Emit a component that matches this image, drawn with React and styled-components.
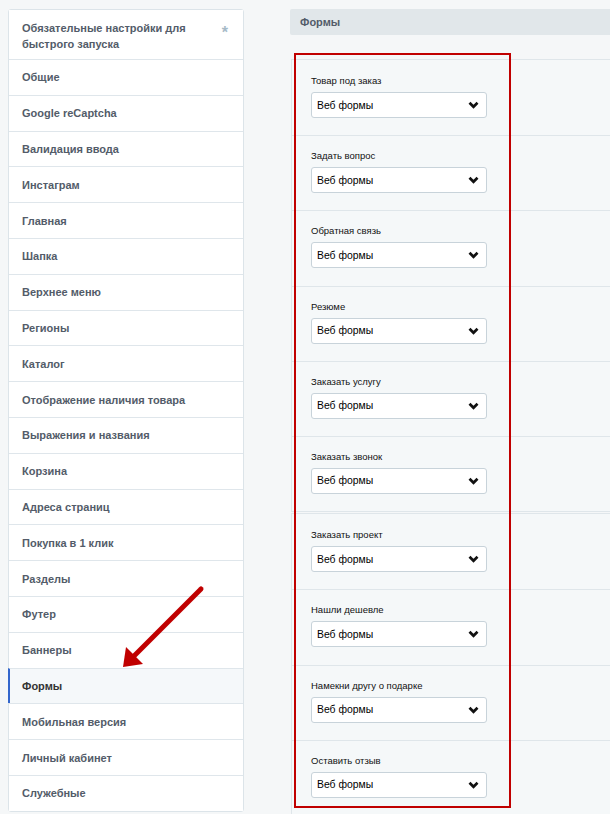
import React from "react";
import styled, { createGlobalStyle } from "styled-components";

const GlobalStyle = createGlobalStyle`
  html, body { margin: 0; padding: 0; background: #f5f7f8; overflow: hidden; }
  body { font-family: "Liberation Sans", Arial, sans-serif; }
`;

const Page = styled.div`
  position: relative;
  display: flex;
  align-items: flex-start;
  gap: 46px;
  padding: 9px 0 0 8px;
  width: 610px;
  height: 814px;
  box-sizing: border-box;
  overflow: hidden;
`;

const Sidebar = styled.nav`
  width: 236px;
  flex: none;
  background: #fff;
  border: 1px solid #dce4e9;
  border-radius: 3px;
  box-sizing: border-box;
`;

const NavItem = styled.div`
  display: flex;
  align-items: ${(p) => (p.$tall ? "flex-start" : "center")};
  justify-content: space-between;
  height: ${(p) => (p.$tall ? "49px" : "35.8px")};
  box-sizing: border-box;
  padding: ${(p) => (p.$tall ? "10px 14px 0 13px" : "0 14px 0 13px")};
  border-top: ${(p) => (p.$first ? "none" : "1px solid #dfe6eb")};
  margin-left: ${(p) => (p.$active ? "-1px" : "0")};
  border-left: ${(p) => (p.$active ? "2px solid #3366cc" : "none")};
  padding-left: ${(p) => (p.$active ? "12px" : "13px")};
  background: ${(p) => (p.$active ? "#f5f8fa" : "#fff")};
  color: ${(p) => (p.$active ? "#333" : "#535c69")};
  font-size: 11px;
  font-weight: bold;
  line-height: 16px;
`;

const Star = styled.span`
  color: #a6bac7;
  font-size: 16px;
  font-weight: bold;
  line-height: 16px;
  margin-top: 5px;
  margin-right: 1px;
`;

const Main = styled.div`
  width: 340px;
  flex: none;
  display: flex;
  flex-direction: column;
`;

const HeaderBar = styled.div`
  height: 26px;
  line-height: 26px;
  background: #e1e7ea;
  border-radius: 2px 0 0 2px;
  padding-left: 10px;
  font-size: 11px;
  font-weight: bold;
  color: #535c69;
  margin-bottom: 24px;
`;

const Card = styled.div`
  margin-left: 1px;
  margin-top: ${(p) => (p.$next ? "1px" : "0")};
  border: 1px solid #dfe6ea;
  border-right: none;
  background: #f5f8f9;
`;

const Row = styled.div`
  height: 75.2px;
  box-sizing: border-box;
  padding: ${(p) => (p.$first ? "14px" : "13px")} 0 0 19px;
  border-top: ${(p) => (p.$first ? "none" : "1px solid #dfe6ea")};
  display: flex;
  flex-direction: column;
  gap: 4px;
`;

const Label = styled.div`
  font-size: 9.5px;
  line-height: 14px;
  color: #111;
`;

const Select = styled.div`
  width: 176px;
  height: 26px;
  box-sizing: border-box;
  border: 1px solid #c8d3da;
  border-radius: 3px;
  background: #fff;
  display: flex;
  align-items: center;
  justify-content: space-between;
  padding: 0 7px 0 5px;
  font-size: 10.4px;
  color: #000;
`;

const Highlight = styled.div`
  position: absolute;
  left: 294px;
  top: 53px;
  width: 217px;
  height: 755px;
  box-sizing: border-box;
  border: 2px solid #c00000;
  pointer-events: none;
`;

const ArrowSvg = styled.svg`
  position: absolute;
  left: 0;
  top: 0;
  pointer-events: none;
`;

const Chevron = () => (
  <svg width="11" height="8" viewBox="0 0 11 8">
    <path d="M1.5 1.8 L5.5 5.8 L9.5 1.8" fill="none" stroke="#111" strokeWidth="2.7" />
  </svg>
);

const navItems = [
  "Общие",
  "Google reCaptcha",
  "Валидация ввода",
  "Инстаграм",
  "Главная",
  "Шапка",
  "Верхнее меню",
  "Регионы",
  "Каталог",
  "Отображение наличия товара",
  "Выражения и названия",
  "Корзина",
  "Адреса страниц",
  "Покупка в 1 клик",
  "Разделы",
  "Футер",
  "Баннеры",
  "Формы",
  "Мобильная версия",
  "Личный кабинет",
  "Служебные",
];

const group1 = [
  "Товар под заказ",
  "Задать вопрос",
  "Обратная связь",
  "Резюме",
  "Заказать услугу",
  "Заказать звонок",
];
const group2 = ["Заказать проект", "Нашли дешевле", "Намекни другу о подарке", "Оставить отзыв"];

const FormRows = ({ items }) =>
  items.map((label, i) => (
    <Row key={label} $first={i === 0}>
      <Label>{label}</Label>
      <Select>
        <span>Веб формы</span>
        <Chevron />
      </Select>
    </Row>
  ));

export default function App() {
  return (
    <>
      <GlobalStyle />
      <Page>
        <Sidebar>
          <NavItem $tall $first>
            <span>
              Обязательные настройки для
              <br />
              быстрого запуска
            </span>
            <Star>*</Star>
          </NavItem>
          {navItems.map((name) => (
            <NavItem key={name} $active={name === "Формы"}>
              {name}
            </NavItem>
          ))}
        </Sidebar>
        <Main>
          <HeaderBar>Формы</HeaderBar>
          <Card>
            <FormRows items={group1} />
          </Card>
          <Card $next>
            <FormRows items={group2} />
          </Card>
        </Main>
        <Highlight />
        <ArrowSvg width="610" height="814" viewBox="0 0 610 814">
          <line x1="201" y1="589" x2="134" y2="656" stroke="#c00000" strokeWidth="5" strokeLinecap="round" />
          <polygon points="123,667 126,647 143,664" fill="#c00000" />
        </ArrowSvg>
      </Page>
    </>
  );
}
